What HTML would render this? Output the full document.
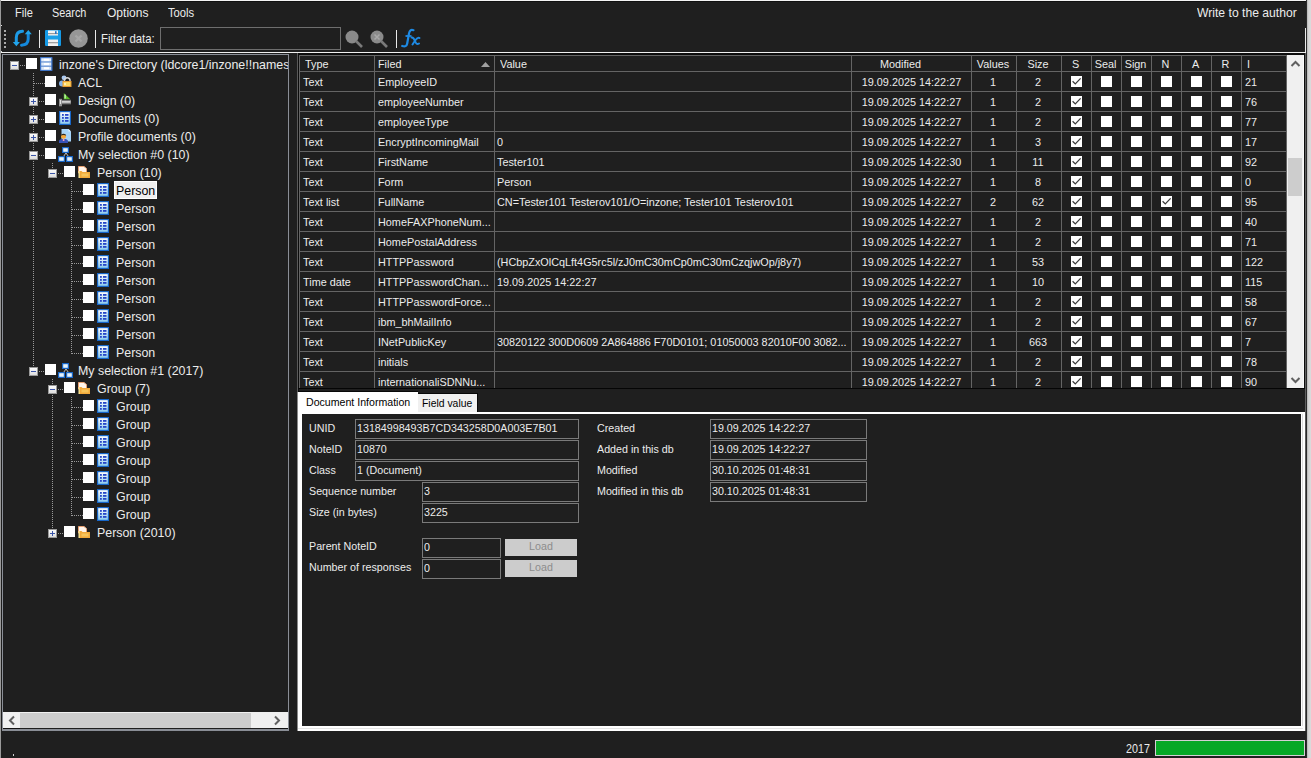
<!DOCTYPE html><html><head><meta charset="utf-8"><style>
html,body{margin:0;padding:0;}
body{width:1311px;height:758px;overflow:hidden;position:relative;background:#1f1f1f;font-family:"Liberation Sans",sans-serif;}
.t{position:absolute;white-space:nowrap;line-height:1;}
.a{position:absolute;}
svg{position:absolute;overflow:visible}
</style></head><body>
<div style="position:absolute;left:0px;top:0px;width:1311px;height:1px;background:#f4f4f4"></div>
<div style="position:absolute;left:0px;top:1px;width:1307px;height:1px;background:#111"></div>
<div style="position:absolute;left:0px;top:0px;width:1px;height:758px;background:#9a9a9a"></div>
<div style="position:absolute;left:1307px;top:0px;width:4px;height:758px;background:linear-gradient(to right,#b4b4b4,#d4d4d4 40%,#dcdcdc)"></div>
<div style="position:absolute;left:1306px;top:0px;width:1px;height:758px;background:#2a2a2a"></div>
<div class="t" style="left:15.30px;top:6.50px;font-size:12.4px;color:#ececec;transform:scaleX(0.8911);transform-origin:0 0;">File</div>
<div class="t" style="left:52.30px;top:6.50px;font-size:12.4px;color:#ececec;transform:scaleX(0.8757);transform-origin:0 0;">Search</div>
<div class="t" style="left:106.50px;top:6.50px;font-size:12.4px;color:#ececec;transform:scaleX(0.9712);transform-origin:0 0;">Options</div>
<div class="t" style="left:167.50px;top:6.50px;font-size:12.4px;color:#ececec;transform:scaleX(0.9053);transform-origin:0 0;">Tools</div>
<div class="t" style="left:1197.40px;top:6.50px;font-size:12.4px;color:#ececec;transform:scaleX(0.9806);transform-origin:0 0;">Write to the author</div>
<div style="position:absolute;left:4px;top:30px;width:2px;height:2px;background:#d8d8d8;border-radius:1px"></div>
<div style="position:absolute;left:4px;top:34px;width:2px;height:2px;background:#d8d8d8;border-radius:1px"></div>
<div style="position:absolute;left:4px;top:38px;width:2px;height:2px;background:#d8d8d8;border-radius:1px"></div>
<div style="position:absolute;left:4px;top:42px;width:2px;height:2px;background:#d8d8d8;border-radius:1px"></div>
<div style="position:absolute;left:4px;top:46px;width:2px;height:2px;background:#d8d8d8;border-radius:1px"></div>
<div style="position:absolute;left:1px;top:25px;width:1px;height:1px;background:#ddd"></div>
<div style="position:absolute;left:1px;top:51px;width:1px;height:1px;background:#ddd"></div>
<svg style="left:10px;top:27px" width="24" height="23" viewBox="0 0 24 23">
<path d="M12.5 4.3 C8.5 4.5 6.3 6.5 6.3 10.5 V15.5" stroke="#1d9be6" stroke-width="3" fill="none" stroke-linecap="round"/>
<path d="M2.8 15 L9.9 15 L6.35 19.3 Z" fill="#22a6ec"/>
<path d="M11.5 18.2 C16 18 18.2 16 18.2 12 V7" stroke="#158ade" stroke-width="3" fill="none" stroke-linecap="round"/>
<path d="M14.8 7.2 L21.8 7.2 L18.3 3 Z" fill="#22a6ec"/>
</svg>
<div style="position:absolute;left:39px;top:30px;width:1px;height:18px;background:#e8e8e8"></div>
<div style="position:absolute;left:95px;top:30px;width:1px;height:18px;background:#e8e8e8"></div>
<div style="position:absolute;left:396px;top:30px;width:1px;height:18px;background:#e8e8e8"></div>
<svg style="left:45px;top:30px" width="16" height="16" viewBox="0 0 16 16">
<rect x="0" y="0" width="16" height="16" rx="1" fill="#159ae6"/>
<rect x="3" y="0.5" width="10" height="5" fill="#f4f4f4"/>
<rect x="3" y="3" width="10" height="1.2" fill="#9a9a9a"/>
<rect x="10" y="1.2" width="1.6" height="2.6" fill="#1f70c8"/>
<rect x="3" y="6" width="10" height="3" fill="#1aa0e8"/>
<rect x="3" y="9.5" width="10" height="6.5" fill="#f0f0f0"/>
<rect x="3" y="12" width="10" height="1.3" fill="#a0a0a0"/>
</svg>
<svg style="left:69px;top:29px" width="19" height="19" viewBox="0 0 19 19">
<circle cx="9.5" cy="9.5" r="9.3" fill="#969696"/>
<path d="M6.5 6.5 L12.5 12.5 M12.5 6.5 L6.5 12.5" stroke="#a6a6a6" stroke-width="2.4"/>
</svg>
<div class="t" style="left:100.70px;top:32.50px;font-size:12.4px;color:#ececec;transform:scaleX(0.9184);transform-origin:0 0;">Filter data:</div>
<div style="position:absolute;left:160px;top:27px;width:179px;height:21px;border:1px solid #6e6e6e"></div>
<svg style="left:345px;top:30px" width="18" height="18" viewBox="0 0 18 18">
<circle cx="7" cy="7" r="6.5" fill="#8a8a8a"/>
<path d="M11 11 L17 17" stroke="#7a7a7a" stroke-width="2.6"/>
</svg>
<svg style="left:370px;top:30px" width="18" height="18" viewBox="0 0 18 18">
<circle cx="7" cy="7" r="6.5" fill="#8a8a8a"/>
<path d="M4.5 4.5 L9.5 9.5 M9.5 4.5 L4.5 9.5" stroke="#a8a8a8" stroke-width="1.5"/>
<path d="M11 11 L17 17" stroke="#7a7a7a" stroke-width="2.6"/>
</svg>
<svg style="left:400px;top:28px" width="21" height="20" viewBox="0 0 21 20">
<path d="M13.5 2.2 C11 1.2 9.6 2.5 9 5.5 L7.2 15.5 C6.7 18.2 5 19 2.2 18" stroke="#1e8ae4" stroke-width="2.2" fill="none" stroke-linecap="round"/>
<path d="M5.5 8 H11.5" stroke="#1e8ae4" stroke-width="1.8"/>
<path d="M11.5 9.5 C13.5 9 14 10.5 15 13 C16 15.8 17 16.8 19 15.5" stroke="#1e8ae4" stroke-width="2" fill="none" stroke-linecap="round"/>
<path d="M19.5 10 C18 9 17 10 15.5 12 L12.5 16.5" stroke="#1e8ae4" stroke-width="2" fill="none" stroke-linecap="round"/>
</svg>
<div style="position:absolute;left:1305px;top:28px;width:1px;height:25px;background:#e8e8e8"></div>
<div style="position:absolute;left:1px;top:52px;width:1305px;height:1px;background:#f0f0f0"></div>
<div style="position:absolute;left:2px;top:54px;width:287px;height:677px;background:#8a8e96"></div>
<div style="position:absolute;left:3px;top:55px;width:285px;height:674px;background:#1f1f1f"></div>
<div style="position:absolute;left:3px;top:55px;width:285px;height:657px;overflow:hidden"><div style="position:absolute;left:-3px;top:-55px;width:1311px;height:758px">
<div style="position:absolute;left:33px;top:73px;width:1px;height:299px;background:repeating-linear-gradient(to bottom,#9a9a9a 0 1px,transparent 1px 2px)"></div>
<div style="position:absolute;left:52px;top:163px;width:1px;height:11px;background:repeating-linear-gradient(to bottom,#9a9a9a 0 1px,transparent 1px 2px)"></div>
<div style="position:absolute;left:52px;top:379px;width:1px;height:155px;background:repeating-linear-gradient(to bottom,#9a9a9a 0 1px,transparent 1px 2px)"></div>
<div style="position:absolute;left:71px;top:181px;width:1px;height:173px;background:repeating-linear-gradient(to bottom,#9a9a9a 0 1px,transparent 1px 2px)"></div>
<div style="position:absolute;left:71px;top:397px;width:1px;height:119px;background:repeating-linear-gradient(to bottom,#9a9a9a 0 1px,transparent 1px 2px)"></div>
<div style="position:absolute;left:20px;top:65px;width:6px;height:1px;background:repeating-linear-gradient(to right,#9a9a9a 0 1px,transparent 1px 2px)"></div>
<div style="position:absolute;left:10px;top:61px;width:7px;height:7px;border:1px solid #9a9a9a;background:linear-gradient(#fbfbfb,#dedede)"></div>
<div style="position:absolute;left:12px;top:65px;width:5px;height:1px;background:#3a55a8"></div>
<div style="position:absolute;left:26px;top:58px;width:11px;height:11px;background:#fff"></div>
<svg style="left:40px;top:57px" width="13" height="14" viewBox="0 0 13 14">
<rect x="0" y="0" width="12.5" height="14" rx="0.8" fill="#3f74c6"/>
<rect x="1.2" y="1.2" width="10" height="3.3" fill="#e4eefb"/>
<rect x="1.2" y="5.4" width="10" height="3.3" fill="#dde9f9"/>
<rect x="1.2" y="9.6" width="10" height="3.3" fill="#d6e4f7"/>
<rect x="4" y="1.8" width="5" height="2" fill="#ffffff"/>
<rect x="4" y="6" width="5" height="2" fill="#ffffff"/>
<rect x="4" y="10.2" width="5" height="2" fill="#ffffff"/>
</svg>
<div class="t" style="left:59.00px;top:58.50px;font-size:12.4px;color:#ececec;">inzone's Directory (ldcore1/inzone!!names.nsf)</div>
<div style="position:absolute;left:34px;top:83px;width:11px;height:1px;background:repeating-linear-gradient(to right,#9a9a9a 0 1px,transparent 1px 2px)"></div>
<div style="position:absolute;left:45px;top:76px;width:11px;height:11px;background:#fff"></div>
<svg style="left:59px;top:75px" width="14" height="13" viewBox="0 0 14 13">
<circle cx="5" cy="2.8" r="2.4" fill="#a9c8f0"/><circle cx="3" cy="8.5" r="3" fill="#86b4ea"/>
<path d="M5.5 6 V4.8 A2.8 2.6 0 0 1 11 4.8 V6" stroke="#d8d8d8" stroke-width="1.5" fill="none"/>
<rect x="3.5" y="6" width="9" height="6" fill="#e89a30"/><rect x="4.5" y="7" width="7" height="4" fill="#fcd864"/><rect x="5.5" y="8" width="1" height="2" fill="#fff"/>
</svg>
<div class="t" style="left:78.00px;top:76.50px;font-size:12.4px;color:#ececec;">ACL</div>
<div style="position:absolute;left:39px;top:101px;width:6px;height:1px;background:repeating-linear-gradient(to right,#9a9a9a 0 1px,transparent 1px 2px)"></div>
<div style="position:absolute;left:29px;top:97px;width:7px;height:7px;border:1px solid #9a9a9a;background:linear-gradient(#fbfbfb,#dedede)"></div>
<div style="position:absolute;left:31px;top:101px;width:5px;height:1px;background:#3a55a8"></div>
<div style="position:absolute;left:33px;top:99px;width:1px;height:5px;background:#3a55a8"></div>
<div style="position:absolute;left:45px;top:94px;width:11px;height:11px;background:#fff"></div>
<svg style="left:59px;top:93px" width="13" height="14" viewBox="0 0 13 14">
<path d="M4.8 0 L11.3 6.3 L4.8 6.3 Z" fill="#5cc22a"/>
<rect x="5.6" y="1.5" width="1" height="4" fill="#eaffea"/>
<rect x="0.5" y="6.8" width="11.5" height="4.5" fill="#7a7a7a"/>
<rect x="2.5" y="8.2" width="9" height="1.4" fill="#e8e8e8"/>
<rect x="0" y="5.8" width="3" height="7.5" fill="#909090"/>
<rect x="1" y="7" width="1" height="4" fill="#e0e0e0"/>
</svg>
<div class="t" style="left:78.00px;top:94.50px;font-size:12.4px;color:#ececec;">Design (0)</div>
<div style="position:absolute;left:39px;top:119px;width:6px;height:1px;background:repeating-linear-gradient(to right,#9a9a9a 0 1px,transparent 1px 2px)"></div>
<div style="position:absolute;left:29px;top:115px;width:7px;height:7px;border:1px solid #9a9a9a;background:linear-gradient(#fbfbfb,#dedede)"></div>
<div style="position:absolute;left:31px;top:119px;width:5px;height:1px;background:#3a55a8"></div>
<div style="position:absolute;left:33px;top:117px;width:1px;height:5px;background:#3a55a8"></div>
<div style="position:absolute;left:45px;top:112px;width:11px;height:11px;background:#fff"></div>
<svg style="left:59px;top:111px" width="12" height="14" viewBox="0 0 12 14">
<defs><linearGradient id="gdoc" x1="0" x2="0" y1="0" y2="1"><stop offset="0" stop-color="#ffffff"/><stop offset="1" stop-color="#8ccbee"/></linearGradient></defs>
<rect x="0" y="0" width="12" height="14" fill="#1766c8"/>
<rect x="1.2" y="1.2" width="9.6" height="11.6" fill="url(#gdoc)"/>
<rect x="3" y="3" width="1.8" height="1.8" fill="#2546c8"/><rect x="6" y="3" width="3.5" height="1.8" fill="#2546c8"/>
<rect x="3" y="6" width="1.8" height="1.8" fill="#2546c8"/><rect x="6" y="6" width="3.5" height="1.8" fill="#2546c8"/>
<rect x="3" y="9" width="1.8" height="1.8" fill="#2546c8"/><rect x="6" y="9" width="3.5" height="1.8" fill="#2546c8"/>
</svg>
<div class="t" style="left:78.00px;top:112.50px;font-size:12.4px;color:#ececec;">Documents (0)</div>
<div style="position:absolute;left:39px;top:137px;width:6px;height:1px;background:repeating-linear-gradient(to right,#9a9a9a 0 1px,transparent 1px 2px)"></div>
<div style="position:absolute;left:29px;top:133px;width:7px;height:7px;border:1px solid #9a9a9a;background:linear-gradient(#fbfbfb,#dedede)"></div>
<div style="position:absolute;left:31px;top:137px;width:5px;height:1px;background:#3a55a8"></div>
<div style="position:absolute;left:33px;top:135px;width:1px;height:5px;background:#3a55a8"></div>
<div style="position:absolute;left:45px;top:130px;width:11px;height:11px;background:#fff"></div>
<svg style="left:59px;top:129px" width="13" height="14" viewBox="0 0 13 14">
<path d="M2.5 0 H9.5 L12 2.5 V12.5 H2.5 Z" fill="#a6d4fa"/>
<path d="M9.5 0 V2.5 H12 Z" fill="#e8f4ff"/>
<circle cx="4.5" cy="7.2" r="2.5" fill="#f6a73a"/>
<path d="M1.8 6.8 C1.8 4 7.2 4 7.2 6.8 C6 5.8 3 5.8 1.8 6.8 Z" fill="#2a2a2a"/>
<path d="M0 14 V12.2 C0 10.6 1.5 10 4.5 10 C7.5 10 9 10.6 9 12.2 V14 Z" fill="#3652b8"/>
<rect x="3.8" y="10" width="1.6" height="2" fill="#f0a0b8"/>
</svg>
<div class="t" style="left:78.00px;top:130.50px;font-size:12.4px;color:#ececec;">Profile documents (0)</div>
<div style="position:absolute;left:39px;top:155px;width:6px;height:1px;background:repeating-linear-gradient(to right,#9a9a9a 0 1px,transparent 1px 2px)"></div>
<div style="position:absolute;left:29px;top:151px;width:7px;height:7px;border:1px solid #9a9a9a;background:linear-gradient(#fbfbfb,#dedede)"></div>
<div style="position:absolute;left:31px;top:155px;width:5px;height:1px;background:#3a55a8"></div>
<div style="position:absolute;left:45px;top:148px;width:11px;height:11px;background:#fff"></div>
<svg style="left:59px;top:147px;margin-left:-1px" width="16" height="16" viewBox="-1 0 16 16">
<path d="M4.5 9.5 L7 6 L9.5 9.5" stroke="#c0c0c0" stroke-width="1" fill="none"/>
<rect x="3" y="0" width="7" height="6" fill="#1766c8"/><rect x="4.2" y="1.2" width="4.6" height="3.6" fill="#e4f2fc"/>
<rect x="-1" y="9" width="7" height="6" fill="#1766c8"/><rect x="0.2" y="10.2" width="4.6" height="3.6" fill="#e4f2fc"/>
<rect x="7" y="9" width="7" height="6" fill="#1766c8"/><rect x="8.2" y="10.2" width="4.6" height="3.6" fill="#e4f2fc"/>
</svg>
<div class="t" style="left:78.00px;top:148.50px;font-size:12.4px;color:#ececec;">My selection #0 (10)</div>
<div style="position:absolute;left:58px;top:173px;width:6px;height:1px;background:repeating-linear-gradient(to right,#9a9a9a 0 1px,transparent 1px 2px)"></div>
<div style="position:absolute;left:48px;top:169px;width:7px;height:7px;border:1px solid #9a9a9a;background:linear-gradient(#fbfbfb,#dedede)"></div>
<div style="position:absolute;left:50px;top:173px;width:5px;height:1px;background:#3a55a8"></div>
<div style="position:absolute;left:64px;top:166px;width:11px;height:11px;background:#fff"></div>
<svg style="left:78px;top:165px" width="14" height="14" viewBox="0 0 14 14">
<path d="M0.5 1.5 H6 L8.5 3.5 V8 H0.5 Z" fill="#fff4ea" stroke="#e8a070" stroke-width="1"/>
<path d="M1 13 V6 H3.5 L4.5 7 H12 V13 Z" fill="#f2a93a"/>
<rect x="0.5" y="6" width="1.2" height="7" fill="#fff1a0"/>
<rect x="3.5" y="8.5" width="7" height="3" fill="#f7c45a"/>
</svg>
<div class="t" style="left:97.00px;top:166.50px;font-size:12.4px;color:#ececec;">Person (10)</div>
<div style="position:absolute;left:72px;top:191px;width:11px;height:1px;background:repeating-linear-gradient(to right,#9a9a9a 0 1px,transparent 1px 2px)"></div>
<div style="position:absolute;left:83px;top:184px;width:11px;height:11px;background:#fff"></div>
<svg style="left:97px;top:183px" width="12" height="14" viewBox="0 0 12 14">
<defs><linearGradient id="gdoc" x1="0" x2="0" y1="0" y2="1"><stop offset="0" stop-color="#ffffff"/><stop offset="1" stop-color="#8ccbee"/></linearGradient></defs>
<rect x="0" y="0" width="12" height="14" fill="#1766c8"/>
<rect x="1.2" y="1.2" width="9.6" height="11.6" fill="url(#gdoc)"/>
<rect x="3" y="3" width="1.8" height="1.8" fill="#2546c8"/><rect x="6" y="3" width="3.5" height="1.8" fill="#2546c8"/>
<rect x="3" y="6" width="1.8" height="1.8" fill="#2546c8"/><rect x="6" y="6" width="3.5" height="1.8" fill="#2546c8"/>
<rect x="3" y="9" width="1.8" height="1.8" fill="#2546c8"/><rect x="6" y="9" width="3.5" height="1.8" fill="#2546c8"/>
</svg>
<div style="position:absolute;left:114px;top:181px;width:41px;height:16px;background:#efefef;border:1px solid #fff"></div>
<div class="t" style="left:116.00px;top:184.50px;font-size:12.4px;color:#000;">Person</div>
<div style="position:absolute;left:72px;top:209px;width:11px;height:1px;background:repeating-linear-gradient(to right,#9a9a9a 0 1px,transparent 1px 2px)"></div>
<div style="position:absolute;left:83px;top:202px;width:11px;height:11px;background:#fff"></div>
<svg style="left:97px;top:201px" width="12" height="14" viewBox="0 0 12 14">
<defs><linearGradient id="gdoc" x1="0" x2="0" y1="0" y2="1"><stop offset="0" stop-color="#ffffff"/><stop offset="1" stop-color="#8ccbee"/></linearGradient></defs>
<rect x="0" y="0" width="12" height="14" fill="#1766c8"/>
<rect x="1.2" y="1.2" width="9.6" height="11.6" fill="url(#gdoc)"/>
<rect x="3" y="3" width="1.8" height="1.8" fill="#2546c8"/><rect x="6" y="3" width="3.5" height="1.8" fill="#2546c8"/>
<rect x="3" y="6" width="1.8" height="1.8" fill="#2546c8"/><rect x="6" y="6" width="3.5" height="1.8" fill="#2546c8"/>
<rect x="3" y="9" width="1.8" height="1.8" fill="#2546c8"/><rect x="6" y="9" width="3.5" height="1.8" fill="#2546c8"/>
</svg>
<div class="t" style="left:116.00px;top:202.50px;font-size:12.4px;color:#ececec;">Person</div>
<div style="position:absolute;left:72px;top:227px;width:11px;height:1px;background:repeating-linear-gradient(to right,#9a9a9a 0 1px,transparent 1px 2px)"></div>
<div style="position:absolute;left:83px;top:220px;width:11px;height:11px;background:#fff"></div>
<svg style="left:97px;top:219px" width="12" height="14" viewBox="0 0 12 14">
<defs><linearGradient id="gdoc" x1="0" x2="0" y1="0" y2="1"><stop offset="0" stop-color="#ffffff"/><stop offset="1" stop-color="#8ccbee"/></linearGradient></defs>
<rect x="0" y="0" width="12" height="14" fill="#1766c8"/>
<rect x="1.2" y="1.2" width="9.6" height="11.6" fill="url(#gdoc)"/>
<rect x="3" y="3" width="1.8" height="1.8" fill="#2546c8"/><rect x="6" y="3" width="3.5" height="1.8" fill="#2546c8"/>
<rect x="3" y="6" width="1.8" height="1.8" fill="#2546c8"/><rect x="6" y="6" width="3.5" height="1.8" fill="#2546c8"/>
<rect x="3" y="9" width="1.8" height="1.8" fill="#2546c8"/><rect x="6" y="9" width="3.5" height="1.8" fill="#2546c8"/>
</svg>
<div class="t" style="left:116.00px;top:220.50px;font-size:12.4px;color:#ececec;">Person</div>
<div style="position:absolute;left:72px;top:245px;width:11px;height:1px;background:repeating-linear-gradient(to right,#9a9a9a 0 1px,transparent 1px 2px)"></div>
<div style="position:absolute;left:83px;top:238px;width:11px;height:11px;background:#fff"></div>
<svg style="left:97px;top:237px" width="12" height="14" viewBox="0 0 12 14">
<defs><linearGradient id="gdoc" x1="0" x2="0" y1="0" y2="1"><stop offset="0" stop-color="#ffffff"/><stop offset="1" stop-color="#8ccbee"/></linearGradient></defs>
<rect x="0" y="0" width="12" height="14" fill="#1766c8"/>
<rect x="1.2" y="1.2" width="9.6" height="11.6" fill="url(#gdoc)"/>
<rect x="3" y="3" width="1.8" height="1.8" fill="#2546c8"/><rect x="6" y="3" width="3.5" height="1.8" fill="#2546c8"/>
<rect x="3" y="6" width="1.8" height="1.8" fill="#2546c8"/><rect x="6" y="6" width="3.5" height="1.8" fill="#2546c8"/>
<rect x="3" y="9" width="1.8" height="1.8" fill="#2546c8"/><rect x="6" y="9" width="3.5" height="1.8" fill="#2546c8"/>
</svg>
<div class="t" style="left:116.00px;top:238.50px;font-size:12.4px;color:#ececec;">Person</div>
<div style="position:absolute;left:72px;top:263px;width:11px;height:1px;background:repeating-linear-gradient(to right,#9a9a9a 0 1px,transparent 1px 2px)"></div>
<div style="position:absolute;left:83px;top:256px;width:11px;height:11px;background:#fff"></div>
<svg style="left:97px;top:255px" width="12" height="14" viewBox="0 0 12 14">
<defs><linearGradient id="gdoc" x1="0" x2="0" y1="0" y2="1"><stop offset="0" stop-color="#ffffff"/><stop offset="1" stop-color="#8ccbee"/></linearGradient></defs>
<rect x="0" y="0" width="12" height="14" fill="#1766c8"/>
<rect x="1.2" y="1.2" width="9.6" height="11.6" fill="url(#gdoc)"/>
<rect x="3" y="3" width="1.8" height="1.8" fill="#2546c8"/><rect x="6" y="3" width="3.5" height="1.8" fill="#2546c8"/>
<rect x="3" y="6" width="1.8" height="1.8" fill="#2546c8"/><rect x="6" y="6" width="3.5" height="1.8" fill="#2546c8"/>
<rect x="3" y="9" width="1.8" height="1.8" fill="#2546c8"/><rect x="6" y="9" width="3.5" height="1.8" fill="#2546c8"/>
</svg>
<div class="t" style="left:116.00px;top:256.50px;font-size:12.4px;color:#ececec;">Person</div>
<div style="position:absolute;left:72px;top:281px;width:11px;height:1px;background:repeating-linear-gradient(to right,#9a9a9a 0 1px,transparent 1px 2px)"></div>
<div style="position:absolute;left:83px;top:274px;width:11px;height:11px;background:#fff"></div>
<svg style="left:97px;top:273px" width="12" height="14" viewBox="0 0 12 14">
<defs><linearGradient id="gdoc" x1="0" x2="0" y1="0" y2="1"><stop offset="0" stop-color="#ffffff"/><stop offset="1" stop-color="#8ccbee"/></linearGradient></defs>
<rect x="0" y="0" width="12" height="14" fill="#1766c8"/>
<rect x="1.2" y="1.2" width="9.6" height="11.6" fill="url(#gdoc)"/>
<rect x="3" y="3" width="1.8" height="1.8" fill="#2546c8"/><rect x="6" y="3" width="3.5" height="1.8" fill="#2546c8"/>
<rect x="3" y="6" width="1.8" height="1.8" fill="#2546c8"/><rect x="6" y="6" width="3.5" height="1.8" fill="#2546c8"/>
<rect x="3" y="9" width="1.8" height="1.8" fill="#2546c8"/><rect x="6" y="9" width="3.5" height="1.8" fill="#2546c8"/>
</svg>
<div class="t" style="left:116.00px;top:274.50px;font-size:12.4px;color:#ececec;">Person</div>
<div style="position:absolute;left:72px;top:299px;width:11px;height:1px;background:repeating-linear-gradient(to right,#9a9a9a 0 1px,transparent 1px 2px)"></div>
<div style="position:absolute;left:83px;top:292px;width:11px;height:11px;background:#fff"></div>
<svg style="left:97px;top:291px" width="12" height="14" viewBox="0 0 12 14">
<defs><linearGradient id="gdoc" x1="0" x2="0" y1="0" y2="1"><stop offset="0" stop-color="#ffffff"/><stop offset="1" stop-color="#8ccbee"/></linearGradient></defs>
<rect x="0" y="0" width="12" height="14" fill="#1766c8"/>
<rect x="1.2" y="1.2" width="9.6" height="11.6" fill="url(#gdoc)"/>
<rect x="3" y="3" width="1.8" height="1.8" fill="#2546c8"/><rect x="6" y="3" width="3.5" height="1.8" fill="#2546c8"/>
<rect x="3" y="6" width="1.8" height="1.8" fill="#2546c8"/><rect x="6" y="6" width="3.5" height="1.8" fill="#2546c8"/>
<rect x="3" y="9" width="1.8" height="1.8" fill="#2546c8"/><rect x="6" y="9" width="3.5" height="1.8" fill="#2546c8"/>
</svg>
<div class="t" style="left:116.00px;top:292.50px;font-size:12.4px;color:#ececec;">Person</div>
<div style="position:absolute;left:72px;top:317px;width:11px;height:1px;background:repeating-linear-gradient(to right,#9a9a9a 0 1px,transparent 1px 2px)"></div>
<div style="position:absolute;left:83px;top:310px;width:11px;height:11px;background:#fff"></div>
<svg style="left:97px;top:309px" width="12" height="14" viewBox="0 0 12 14">
<defs><linearGradient id="gdoc" x1="0" x2="0" y1="0" y2="1"><stop offset="0" stop-color="#ffffff"/><stop offset="1" stop-color="#8ccbee"/></linearGradient></defs>
<rect x="0" y="0" width="12" height="14" fill="#1766c8"/>
<rect x="1.2" y="1.2" width="9.6" height="11.6" fill="url(#gdoc)"/>
<rect x="3" y="3" width="1.8" height="1.8" fill="#2546c8"/><rect x="6" y="3" width="3.5" height="1.8" fill="#2546c8"/>
<rect x="3" y="6" width="1.8" height="1.8" fill="#2546c8"/><rect x="6" y="6" width="3.5" height="1.8" fill="#2546c8"/>
<rect x="3" y="9" width="1.8" height="1.8" fill="#2546c8"/><rect x="6" y="9" width="3.5" height="1.8" fill="#2546c8"/>
</svg>
<div class="t" style="left:116.00px;top:310.50px;font-size:12.4px;color:#ececec;">Person</div>
<div style="position:absolute;left:72px;top:335px;width:11px;height:1px;background:repeating-linear-gradient(to right,#9a9a9a 0 1px,transparent 1px 2px)"></div>
<div style="position:absolute;left:83px;top:328px;width:11px;height:11px;background:#fff"></div>
<svg style="left:97px;top:327px" width="12" height="14" viewBox="0 0 12 14">
<defs><linearGradient id="gdoc" x1="0" x2="0" y1="0" y2="1"><stop offset="0" stop-color="#ffffff"/><stop offset="1" stop-color="#8ccbee"/></linearGradient></defs>
<rect x="0" y="0" width="12" height="14" fill="#1766c8"/>
<rect x="1.2" y="1.2" width="9.6" height="11.6" fill="url(#gdoc)"/>
<rect x="3" y="3" width="1.8" height="1.8" fill="#2546c8"/><rect x="6" y="3" width="3.5" height="1.8" fill="#2546c8"/>
<rect x="3" y="6" width="1.8" height="1.8" fill="#2546c8"/><rect x="6" y="6" width="3.5" height="1.8" fill="#2546c8"/>
<rect x="3" y="9" width="1.8" height="1.8" fill="#2546c8"/><rect x="6" y="9" width="3.5" height="1.8" fill="#2546c8"/>
</svg>
<div class="t" style="left:116.00px;top:328.50px;font-size:12.4px;color:#ececec;">Person</div>
<div style="position:absolute;left:72px;top:353px;width:11px;height:1px;background:repeating-linear-gradient(to right,#9a9a9a 0 1px,transparent 1px 2px)"></div>
<div style="position:absolute;left:83px;top:346px;width:11px;height:11px;background:#fff"></div>
<svg style="left:97px;top:345px" width="12" height="14" viewBox="0 0 12 14">
<defs><linearGradient id="gdoc" x1="0" x2="0" y1="0" y2="1"><stop offset="0" stop-color="#ffffff"/><stop offset="1" stop-color="#8ccbee"/></linearGradient></defs>
<rect x="0" y="0" width="12" height="14" fill="#1766c8"/>
<rect x="1.2" y="1.2" width="9.6" height="11.6" fill="url(#gdoc)"/>
<rect x="3" y="3" width="1.8" height="1.8" fill="#2546c8"/><rect x="6" y="3" width="3.5" height="1.8" fill="#2546c8"/>
<rect x="3" y="6" width="1.8" height="1.8" fill="#2546c8"/><rect x="6" y="6" width="3.5" height="1.8" fill="#2546c8"/>
<rect x="3" y="9" width="1.8" height="1.8" fill="#2546c8"/><rect x="6" y="9" width="3.5" height="1.8" fill="#2546c8"/>
</svg>
<div class="t" style="left:116.00px;top:346.50px;font-size:12.4px;color:#ececec;">Person</div>
<div style="position:absolute;left:39px;top:371px;width:6px;height:1px;background:repeating-linear-gradient(to right,#9a9a9a 0 1px,transparent 1px 2px)"></div>
<div style="position:absolute;left:29px;top:367px;width:7px;height:7px;border:1px solid #9a9a9a;background:linear-gradient(#fbfbfb,#dedede)"></div>
<div style="position:absolute;left:31px;top:371px;width:5px;height:1px;background:#3a55a8"></div>
<div style="position:absolute;left:45px;top:364px;width:11px;height:11px;background:#fff"></div>
<svg style="left:59px;top:363px;margin-left:-1px" width="16" height="16" viewBox="-1 0 16 16">
<path d="M4.5 9.5 L7 6 L9.5 9.5" stroke="#c0c0c0" stroke-width="1" fill="none"/>
<rect x="3" y="0" width="7" height="6" fill="#1766c8"/><rect x="4.2" y="1.2" width="4.6" height="3.6" fill="#e4f2fc"/>
<rect x="-1" y="9" width="7" height="6" fill="#1766c8"/><rect x="0.2" y="10.2" width="4.6" height="3.6" fill="#e4f2fc"/>
<rect x="7" y="9" width="7" height="6" fill="#1766c8"/><rect x="8.2" y="10.2" width="4.6" height="3.6" fill="#e4f2fc"/>
</svg>
<div class="t" style="left:78.00px;top:364.50px;font-size:12.4px;color:#ececec;">My selection #1 (2017)</div>
<div style="position:absolute;left:58px;top:389px;width:6px;height:1px;background:repeating-linear-gradient(to right,#9a9a9a 0 1px,transparent 1px 2px)"></div>
<div style="position:absolute;left:48px;top:385px;width:7px;height:7px;border:1px solid #9a9a9a;background:linear-gradient(#fbfbfb,#dedede)"></div>
<div style="position:absolute;left:50px;top:389px;width:5px;height:1px;background:#3a55a8"></div>
<div style="position:absolute;left:64px;top:382px;width:11px;height:11px;background:#fff"></div>
<svg style="left:78px;top:381px" width="14" height="14" viewBox="0 0 14 14">
<path d="M0.5 1.5 H6 L8.5 3.5 V8 H0.5 Z" fill="#fff4ea" stroke="#e8a070" stroke-width="1"/>
<path d="M1 13 V6 H3.5 L4.5 7 H12 V13 Z" fill="#f2a93a"/>
<rect x="0.5" y="6" width="1.2" height="7" fill="#fff1a0"/>
<rect x="3.5" y="8.5" width="7" height="3" fill="#f7c45a"/>
</svg>
<div class="t" style="left:97.00px;top:382.50px;font-size:12.4px;color:#ececec;">Group (7)</div>
<div style="position:absolute;left:72px;top:407px;width:11px;height:1px;background:repeating-linear-gradient(to right,#9a9a9a 0 1px,transparent 1px 2px)"></div>
<div style="position:absolute;left:83px;top:400px;width:11px;height:11px;background:#fff"></div>
<svg style="left:97px;top:399px" width="12" height="14" viewBox="0 0 12 14">
<defs><linearGradient id="gdoc" x1="0" x2="0" y1="0" y2="1"><stop offset="0" stop-color="#ffffff"/><stop offset="1" stop-color="#8ccbee"/></linearGradient></defs>
<rect x="0" y="0" width="12" height="14" fill="#1766c8"/>
<rect x="1.2" y="1.2" width="9.6" height="11.6" fill="url(#gdoc)"/>
<rect x="3" y="3" width="1.8" height="1.8" fill="#2546c8"/><rect x="6" y="3" width="3.5" height="1.8" fill="#2546c8"/>
<rect x="3" y="6" width="1.8" height="1.8" fill="#2546c8"/><rect x="6" y="6" width="3.5" height="1.8" fill="#2546c8"/>
<rect x="3" y="9" width="1.8" height="1.8" fill="#2546c8"/><rect x="6" y="9" width="3.5" height="1.8" fill="#2546c8"/>
</svg>
<div class="t" style="left:116.00px;top:400.50px;font-size:12.4px;color:#ececec;">Group</div>
<div style="position:absolute;left:72px;top:425px;width:11px;height:1px;background:repeating-linear-gradient(to right,#9a9a9a 0 1px,transparent 1px 2px)"></div>
<div style="position:absolute;left:83px;top:418px;width:11px;height:11px;background:#fff"></div>
<svg style="left:97px;top:417px" width="12" height="14" viewBox="0 0 12 14">
<defs><linearGradient id="gdoc" x1="0" x2="0" y1="0" y2="1"><stop offset="0" stop-color="#ffffff"/><stop offset="1" stop-color="#8ccbee"/></linearGradient></defs>
<rect x="0" y="0" width="12" height="14" fill="#1766c8"/>
<rect x="1.2" y="1.2" width="9.6" height="11.6" fill="url(#gdoc)"/>
<rect x="3" y="3" width="1.8" height="1.8" fill="#2546c8"/><rect x="6" y="3" width="3.5" height="1.8" fill="#2546c8"/>
<rect x="3" y="6" width="1.8" height="1.8" fill="#2546c8"/><rect x="6" y="6" width="3.5" height="1.8" fill="#2546c8"/>
<rect x="3" y="9" width="1.8" height="1.8" fill="#2546c8"/><rect x="6" y="9" width="3.5" height="1.8" fill="#2546c8"/>
</svg>
<div class="t" style="left:116.00px;top:418.50px;font-size:12.4px;color:#ececec;">Group</div>
<div style="position:absolute;left:72px;top:443px;width:11px;height:1px;background:repeating-linear-gradient(to right,#9a9a9a 0 1px,transparent 1px 2px)"></div>
<div style="position:absolute;left:83px;top:436px;width:11px;height:11px;background:#fff"></div>
<svg style="left:97px;top:435px" width="12" height="14" viewBox="0 0 12 14">
<defs><linearGradient id="gdoc" x1="0" x2="0" y1="0" y2="1"><stop offset="0" stop-color="#ffffff"/><stop offset="1" stop-color="#8ccbee"/></linearGradient></defs>
<rect x="0" y="0" width="12" height="14" fill="#1766c8"/>
<rect x="1.2" y="1.2" width="9.6" height="11.6" fill="url(#gdoc)"/>
<rect x="3" y="3" width="1.8" height="1.8" fill="#2546c8"/><rect x="6" y="3" width="3.5" height="1.8" fill="#2546c8"/>
<rect x="3" y="6" width="1.8" height="1.8" fill="#2546c8"/><rect x="6" y="6" width="3.5" height="1.8" fill="#2546c8"/>
<rect x="3" y="9" width="1.8" height="1.8" fill="#2546c8"/><rect x="6" y="9" width="3.5" height="1.8" fill="#2546c8"/>
</svg>
<div class="t" style="left:116.00px;top:436.50px;font-size:12.4px;color:#ececec;">Group</div>
<div style="position:absolute;left:72px;top:461px;width:11px;height:1px;background:repeating-linear-gradient(to right,#9a9a9a 0 1px,transparent 1px 2px)"></div>
<div style="position:absolute;left:83px;top:454px;width:11px;height:11px;background:#fff"></div>
<svg style="left:97px;top:453px" width="12" height="14" viewBox="0 0 12 14">
<defs><linearGradient id="gdoc" x1="0" x2="0" y1="0" y2="1"><stop offset="0" stop-color="#ffffff"/><stop offset="1" stop-color="#8ccbee"/></linearGradient></defs>
<rect x="0" y="0" width="12" height="14" fill="#1766c8"/>
<rect x="1.2" y="1.2" width="9.6" height="11.6" fill="url(#gdoc)"/>
<rect x="3" y="3" width="1.8" height="1.8" fill="#2546c8"/><rect x="6" y="3" width="3.5" height="1.8" fill="#2546c8"/>
<rect x="3" y="6" width="1.8" height="1.8" fill="#2546c8"/><rect x="6" y="6" width="3.5" height="1.8" fill="#2546c8"/>
<rect x="3" y="9" width="1.8" height="1.8" fill="#2546c8"/><rect x="6" y="9" width="3.5" height="1.8" fill="#2546c8"/>
</svg>
<div class="t" style="left:116.00px;top:454.50px;font-size:12.4px;color:#ececec;">Group</div>
<div style="position:absolute;left:72px;top:479px;width:11px;height:1px;background:repeating-linear-gradient(to right,#9a9a9a 0 1px,transparent 1px 2px)"></div>
<div style="position:absolute;left:83px;top:472px;width:11px;height:11px;background:#fff"></div>
<svg style="left:97px;top:471px" width="12" height="14" viewBox="0 0 12 14">
<defs><linearGradient id="gdoc" x1="0" x2="0" y1="0" y2="1"><stop offset="0" stop-color="#ffffff"/><stop offset="1" stop-color="#8ccbee"/></linearGradient></defs>
<rect x="0" y="0" width="12" height="14" fill="#1766c8"/>
<rect x="1.2" y="1.2" width="9.6" height="11.6" fill="url(#gdoc)"/>
<rect x="3" y="3" width="1.8" height="1.8" fill="#2546c8"/><rect x="6" y="3" width="3.5" height="1.8" fill="#2546c8"/>
<rect x="3" y="6" width="1.8" height="1.8" fill="#2546c8"/><rect x="6" y="6" width="3.5" height="1.8" fill="#2546c8"/>
<rect x="3" y="9" width="1.8" height="1.8" fill="#2546c8"/><rect x="6" y="9" width="3.5" height="1.8" fill="#2546c8"/>
</svg>
<div class="t" style="left:116.00px;top:472.50px;font-size:12.4px;color:#ececec;">Group</div>
<div style="position:absolute;left:72px;top:497px;width:11px;height:1px;background:repeating-linear-gradient(to right,#9a9a9a 0 1px,transparent 1px 2px)"></div>
<div style="position:absolute;left:83px;top:490px;width:11px;height:11px;background:#fff"></div>
<svg style="left:97px;top:489px" width="12" height="14" viewBox="0 0 12 14">
<defs><linearGradient id="gdoc" x1="0" x2="0" y1="0" y2="1"><stop offset="0" stop-color="#ffffff"/><stop offset="1" stop-color="#8ccbee"/></linearGradient></defs>
<rect x="0" y="0" width="12" height="14" fill="#1766c8"/>
<rect x="1.2" y="1.2" width="9.6" height="11.6" fill="url(#gdoc)"/>
<rect x="3" y="3" width="1.8" height="1.8" fill="#2546c8"/><rect x="6" y="3" width="3.5" height="1.8" fill="#2546c8"/>
<rect x="3" y="6" width="1.8" height="1.8" fill="#2546c8"/><rect x="6" y="6" width="3.5" height="1.8" fill="#2546c8"/>
<rect x="3" y="9" width="1.8" height="1.8" fill="#2546c8"/><rect x="6" y="9" width="3.5" height="1.8" fill="#2546c8"/>
</svg>
<div class="t" style="left:116.00px;top:490.50px;font-size:12.4px;color:#ececec;">Group</div>
<div style="position:absolute;left:72px;top:515px;width:11px;height:1px;background:repeating-linear-gradient(to right,#9a9a9a 0 1px,transparent 1px 2px)"></div>
<div style="position:absolute;left:83px;top:508px;width:11px;height:11px;background:#fff"></div>
<svg style="left:97px;top:507px" width="12" height="14" viewBox="0 0 12 14">
<defs><linearGradient id="gdoc" x1="0" x2="0" y1="0" y2="1"><stop offset="0" stop-color="#ffffff"/><stop offset="1" stop-color="#8ccbee"/></linearGradient></defs>
<rect x="0" y="0" width="12" height="14" fill="#1766c8"/>
<rect x="1.2" y="1.2" width="9.6" height="11.6" fill="url(#gdoc)"/>
<rect x="3" y="3" width="1.8" height="1.8" fill="#2546c8"/><rect x="6" y="3" width="3.5" height="1.8" fill="#2546c8"/>
<rect x="3" y="6" width="1.8" height="1.8" fill="#2546c8"/><rect x="6" y="6" width="3.5" height="1.8" fill="#2546c8"/>
<rect x="3" y="9" width="1.8" height="1.8" fill="#2546c8"/><rect x="6" y="9" width="3.5" height="1.8" fill="#2546c8"/>
</svg>
<div class="t" style="left:116.00px;top:508.50px;font-size:12.4px;color:#ececec;">Group</div>
<div style="position:absolute;left:58px;top:533px;width:6px;height:1px;background:repeating-linear-gradient(to right,#9a9a9a 0 1px,transparent 1px 2px)"></div>
<div style="position:absolute;left:48px;top:529px;width:7px;height:7px;border:1px solid #9a9a9a;background:linear-gradient(#fbfbfb,#dedede)"></div>
<div style="position:absolute;left:50px;top:533px;width:5px;height:1px;background:#3a55a8"></div>
<div style="position:absolute;left:52px;top:531px;width:1px;height:5px;background:#3a55a8"></div>
<div style="position:absolute;left:64px;top:526px;width:11px;height:11px;background:#fff"></div>
<svg style="left:78px;top:525px" width="14" height="14" viewBox="0 0 14 14">
<path d="M0.5 1.5 H6 L8.5 3.5 V8 H0.5 Z" fill="#fff4ea" stroke="#e8a070" stroke-width="1"/>
<path d="M1 13 V6 H3.5 L4.5 7 H12 V13 Z" fill="#f2a93a"/>
<rect x="0.5" y="6" width="1.2" height="7" fill="#fff1a0"/>
<rect x="3.5" y="8.5" width="7" height="3" fill="#f7c45a"/>
</svg>
<div class="t" style="left:97.00px;top:526.50px;font-size:12.4px;color:#ececec;">Person (2010)</div>
</div></div>
<div style="position:absolute;left:288px;top:54px;width:1px;height:677px;background:#8a8e96"></div>
<div style="position:absolute;left:289px;top:53px;width:8px;height:680px;background:#1f1f1f"></div>
<div style="position:absolute;left:3px;top:712px;width:285px;height:16px;background:#f0f0f0"></div>
<div style="position:absolute;left:20px;top:713px;width:231px;height:15px;background:#cdcdcd"></div>
<div style="position:absolute;left:3px;top:728px;width:17px;height:1px;background:#101010"></div>
<div style="position:absolute;left:270px;top:728px;width:18px;height:1px;background:#101010"></div>
<svg style="left:8px;top:716px" width="8" height="9" viewBox="0 0 8 9"><path d="M6 0.5 L2 4.5 L6 8.5" stroke="#606060" stroke-width="2" fill="none"/></svg>
<svg style="left:273px;top:716px" width="8" height="9" viewBox="0 0 8 9"><path d="M2 0.5 L6 4.5 L2 8.5" stroke="#606060" stroke-width="2" fill="none"/></svg>
<div style="position:absolute;left:297px;top:53px;width:1px;height:339px;background:#5a5a5a"></div>
<div style="position:absolute;left:298px;top:53px;width:1007px;height:2px;background:#0c0c0c"></div>
<div style="position:absolute;left:298px;top:53px;width:1px;height:339px;background:#0c0c0c"></div>
<div style="position:absolute;left:1304px;top:53px;width:1px;height:336px;background:#0c0c0c"></div>
<div style="position:absolute;left:1305px;top:53px;width:1px;height:678px;background:#5e5e5e"></div>
<div style="position:absolute;left:299px;top:55px;width:1px;height:333px;background:#646464"></div>
<div style="position:absolute;left:374px;top:55px;width:1px;height:333px;background:#646464"></div>
<div style="position:absolute;left:494px;top:55px;width:1px;height:333px;background:#646464"></div>
<div style="position:absolute;left:851px;top:55px;width:1px;height:333px;background:#646464"></div>
<div style="position:absolute;left:971px;top:55px;width:1px;height:333px;background:#646464"></div>
<div style="position:absolute;left:1016px;top:55px;width:1px;height:333px;background:#646464"></div>
<div style="position:absolute;left:1061px;top:55px;width:1px;height:333px;background:#646464"></div>
<div style="position:absolute;left:1091px;top:55px;width:1px;height:333px;background:#646464"></div>
<div style="position:absolute;left:1121px;top:55px;width:1px;height:333px;background:#646464"></div>
<div style="position:absolute;left:1151px;top:55px;width:1px;height:333px;background:#646464"></div>
<div style="position:absolute;left:1181px;top:55px;width:1px;height:333px;background:#646464"></div>
<div style="position:absolute;left:1211px;top:55px;width:1px;height:333px;background:#646464"></div>
<div style="position:absolute;left:1241px;top:55px;width:1px;height:333px;background:#646464"></div>
<div style="position:absolute;left:1286px;top:55px;width:1px;height:333px;background:#646464"></div>
<div style="position:absolute;left:299px;top:55px;width:988px;height:1px;background:#646464"></div>
<div style="position:absolute;left:299px;top:71px;width:988px;height:1px;background:#646464"></div>
<div style="position:absolute;left:299px;top:91px;width:988px;height:1px;background:#646464"></div>
<div style="position:absolute;left:299px;top:111px;width:988px;height:1px;background:#646464"></div>
<div style="position:absolute;left:299px;top:131px;width:988px;height:1px;background:#646464"></div>
<div style="position:absolute;left:299px;top:151px;width:988px;height:1px;background:#646464"></div>
<div style="position:absolute;left:299px;top:171px;width:988px;height:1px;background:#646464"></div>
<div style="position:absolute;left:299px;top:191px;width:988px;height:1px;background:#646464"></div>
<div style="position:absolute;left:299px;top:211px;width:988px;height:1px;background:#646464"></div>
<div style="position:absolute;left:299px;top:231px;width:988px;height:1px;background:#646464"></div>
<div style="position:absolute;left:299px;top:251px;width:988px;height:1px;background:#646464"></div>
<div style="position:absolute;left:299px;top:271px;width:988px;height:1px;background:#646464"></div>
<div style="position:absolute;left:299px;top:291px;width:988px;height:1px;background:#646464"></div>
<div style="position:absolute;left:299px;top:311px;width:988px;height:1px;background:#646464"></div>
<div style="position:absolute;left:299px;top:331px;width:988px;height:1px;background:#646464"></div>
<div style="position:absolute;left:299px;top:351px;width:988px;height:1px;background:#646464"></div>
<div style="position:absolute;left:299px;top:371px;width:988px;height:1px;background:#646464"></div>
<div class="t" style="left:305.00px;top:58.18px;font-size:11.6px;color:#ececec;transform:scaleX(0.935);transform-origin:0 0;">Type</div>
<div class="t" style="left:378.00px;top:58.18px;font-size:11.6px;color:#ececec;transform:scaleX(0.935);transform-origin:0 0;">Filed</div>
<svg style="left:481px;top:62px" width="9" height="5" viewBox="0 0 9 5"><path d="M0 5 L4.5 0 L9 5 Z" fill="#a0a0a0"/></svg>
<div class="t" style="left:500.00px;top:58.18px;font-size:11.6px;color:#ececec;transform:scaleX(0.935);transform-origin:0 0;">Value</div>
<div class="t" style="left:841px;width:119px;text-align:center;top:58.18px;font-size:11.6px;color:#ececec;transform:scaleX(0.935);transform-origin:50% 0;">Modified</div>
<div class="t" style="left:971px;width:44px;text-align:center;top:58.18px;font-size:11.6px;color:#ececec;transform:scaleX(0.935);transform-origin:50% 0;">Values</div>
<div class="t" style="left:1016px;width:44px;text-align:center;top:58.18px;font-size:11.6px;color:#ececec;transform:scaleX(0.935);transform-origin:50% 0;">Size</div>
<div class="t" style="left:1061px;width:29px;text-align:center;top:58.18px;font-size:11.6px;color:#ececec;transform:scaleX(0.935);transform-origin:50% 0;">S</div>
<div class="t" style="left:1091px;width:29px;text-align:center;top:58.18px;font-size:11.6px;color:#ececec;transform:scaleX(0.935);transform-origin:50% 0;">Seal</div>
<div class="t" style="left:1121px;width:29px;text-align:center;top:58.18px;font-size:11.6px;color:#ececec;transform:scaleX(0.935);transform-origin:50% 0;">Sign</div>
<div class="t" style="left:1151px;width:29px;text-align:center;top:58.18px;font-size:11.6px;color:#ececec;transform:scaleX(0.935);transform-origin:50% 0;">N</div>
<div class="t" style="left:1181px;width:29px;text-align:center;top:58.18px;font-size:11.6px;color:#ececec;transform:scaleX(0.935);transform-origin:50% 0;">A</div>
<div class="t" style="left:1211px;width:29px;text-align:center;top:58.18px;font-size:11.6px;color:#ececec;transform:scaleX(0.935);transform-origin:50% 0;">R</div>
<div class="t" style="left:1247.00px;top:58.18px;font-size:11.6px;color:#ececec;transform:scaleX(0.935);transform-origin:0 0;">I</div>
<div class="t" style="left:302.50px;top:76.18px;font-size:11.6px;color:#ececec;transform:scaleX(0.935);transform-origin:0 0;">Text</div>
<div class="t" style="left:377.50px;top:76.18px;font-size:11.6px;color:#ececec;transform:scaleX(0.935);transform-origin:0 0;">EmployeeID</div>
<div class="t" style="left:852px;width:119px;text-align:center;top:76.18px;font-size:11.6px;color:#ececec;transform:scaleX(0.935);transform-origin:50% 0;">19.09.2025 14:22:27</div>
<div class="t" style="left:971px;width:44px;text-align:center;top:76.18px;font-size:11.6px;color:#ececec;transform:scaleX(0.935);transform-origin:50% 0;">1</div>
<div class="t" style="left:1016px;width:44px;text-align:center;top:76.18px;font-size:11.6px;color:#ececec;transform:scaleX(0.935);transform-origin:50% 0;">2</div>
<svg style="left:1071px;top:76px" width="11" height="11" viewBox="0 0 11 11"><rect width="11" height="11" fill="#fff"/><path d="M1.6 5.2 L4.3 7.9 L9.6 2.4" stroke="#3a3a3a" stroke-width="1.25" fill="none"/></svg>
<div style="position:absolute;left:1101px;top:76px;width:11px;height:11px;background:#fff"></div>
<div style="position:absolute;left:1131px;top:76px;width:11px;height:11px;background:#fff"></div>
<div style="position:absolute;left:1161px;top:76px;width:11px;height:11px;background:#fff"></div>
<div style="position:absolute;left:1191px;top:76px;width:11px;height:11px;background:#fff"></div>
<div style="position:absolute;left:1221px;top:76px;width:11px;height:11px;background:#fff"></div>
<div class="t" style="left:1245.00px;top:76.18px;font-size:11.6px;color:#ececec;transform:scaleX(0.935);transform-origin:0 0;">21</div>
<div class="t" style="left:302.50px;top:96.18px;font-size:11.6px;color:#ececec;transform:scaleX(0.935);transform-origin:0 0;">Text</div>
<div class="t" style="left:377.50px;top:96.18px;font-size:11.6px;color:#ececec;transform:scaleX(0.935);transform-origin:0 0;">employeeNumber</div>
<div class="t" style="left:852px;width:119px;text-align:center;top:96.18px;font-size:11.6px;color:#ececec;transform:scaleX(0.935);transform-origin:50% 0;">19.09.2025 14:22:27</div>
<div class="t" style="left:971px;width:44px;text-align:center;top:96.18px;font-size:11.6px;color:#ececec;transform:scaleX(0.935);transform-origin:50% 0;">1</div>
<div class="t" style="left:1016px;width:44px;text-align:center;top:96.18px;font-size:11.6px;color:#ececec;transform:scaleX(0.935);transform-origin:50% 0;">2</div>
<svg style="left:1071px;top:96px" width="11" height="11" viewBox="0 0 11 11"><rect width="11" height="11" fill="#fff"/><path d="M1.6 5.2 L4.3 7.9 L9.6 2.4" stroke="#3a3a3a" stroke-width="1.25" fill="none"/></svg>
<div style="position:absolute;left:1101px;top:96px;width:11px;height:11px;background:#fff"></div>
<div style="position:absolute;left:1131px;top:96px;width:11px;height:11px;background:#fff"></div>
<div style="position:absolute;left:1161px;top:96px;width:11px;height:11px;background:#fff"></div>
<div style="position:absolute;left:1191px;top:96px;width:11px;height:11px;background:#fff"></div>
<div style="position:absolute;left:1221px;top:96px;width:11px;height:11px;background:#fff"></div>
<div class="t" style="left:1245.00px;top:96.18px;font-size:11.6px;color:#ececec;transform:scaleX(0.935);transform-origin:0 0;">76</div>
<div class="t" style="left:302.50px;top:116.18px;font-size:11.6px;color:#ececec;transform:scaleX(0.935);transform-origin:0 0;">Text</div>
<div class="t" style="left:377.50px;top:116.18px;font-size:11.6px;color:#ececec;transform:scaleX(0.935);transform-origin:0 0;">employeeType</div>
<div class="t" style="left:852px;width:119px;text-align:center;top:116.18px;font-size:11.6px;color:#ececec;transform:scaleX(0.935);transform-origin:50% 0;">19.09.2025 14:22:27</div>
<div class="t" style="left:971px;width:44px;text-align:center;top:116.18px;font-size:11.6px;color:#ececec;transform:scaleX(0.935);transform-origin:50% 0;">1</div>
<div class="t" style="left:1016px;width:44px;text-align:center;top:116.18px;font-size:11.6px;color:#ececec;transform:scaleX(0.935);transform-origin:50% 0;">2</div>
<svg style="left:1071px;top:116px" width="11" height="11" viewBox="0 0 11 11"><rect width="11" height="11" fill="#fff"/><path d="M1.6 5.2 L4.3 7.9 L9.6 2.4" stroke="#3a3a3a" stroke-width="1.25" fill="none"/></svg>
<div style="position:absolute;left:1101px;top:116px;width:11px;height:11px;background:#fff"></div>
<div style="position:absolute;left:1131px;top:116px;width:11px;height:11px;background:#fff"></div>
<div style="position:absolute;left:1161px;top:116px;width:11px;height:11px;background:#fff"></div>
<div style="position:absolute;left:1191px;top:116px;width:11px;height:11px;background:#fff"></div>
<div style="position:absolute;left:1221px;top:116px;width:11px;height:11px;background:#fff"></div>
<div class="t" style="left:1245.00px;top:116.18px;font-size:11.6px;color:#ececec;transform:scaleX(0.935);transform-origin:0 0;">77</div>
<div class="t" style="left:302.50px;top:136.18px;font-size:11.6px;color:#ececec;transform:scaleX(0.935);transform-origin:0 0;">Text</div>
<div class="t" style="left:377.50px;top:136.18px;font-size:11.6px;color:#ececec;transform:scaleX(0.935);transform-origin:0 0;">EncryptIncomingMail</div>
<div class="t" style="left:496.50px;top:136.18px;font-size:11.6px;color:#ececec;transform:scaleX(0.935);transform-origin:0 0;">0</div>
<div class="t" style="left:852px;width:119px;text-align:center;top:136.18px;font-size:11.6px;color:#ececec;transform:scaleX(0.935);transform-origin:50% 0;">19.09.2025 14:22:27</div>
<div class="t" style="left:971px;width:44px;text-align:center;top:136.18px;font-size:11.6px;color:#ececec;transform:scaleX(0.935);transform-origin:50% 0;">1</div>
<div class="t" style="left:1016px;width:44px;text-align:center;top:136.18px;font-size:11.6px;color:#ececec;transform:scaleX(0.935);transform-origin:50% 0;">3</div>
<svg style="left:1071px;top:136px" width="11" height="11" viewBox="0 0 11 11"><rect width="11" height="11" fill="#fff"/><path d="M1.6 5.2 L4.3 7.9 L9.6 2.4" stroke="#3a3a3a" stroke-width="1.25" fill="none"/></svg>
<div style="position:absolute;left:1101px;top:136px;width:11px;height:11px;background:#fff"></div>
<div style="position:absolute;left:1131px;top:136px;width:11px;height:11px;background:#fff"></div>
<div style="position:absolute;left:1161px;top:136px;width:11px;height:11px;background:#fff"></div>
<div style="position:absolute;left:1191px;top:136px;width:11px;height:11px;background:#fff"></div>
<div style="position:absolute;left:1221px;top:136px;width:11px;height:11px;background:#fff"></div>
<div class="t" style="left:1245.00px;top:136.18px;font-size:11.6px;color:#ececec;transform:scaleX(0.935);transform-origin:0 0;">17</div>
<div class="t" style="left:302.50px;top:156.18px;font-size:11.6px;color:#ececec;transform:scaleX(0.935);transform-origin:0 0;">Text</div>
<div class="t" style="left:377.50px;top:156.18px;font-size:11.6px;color:#ececec;transform:scaleX(0.935);transform-origin:0 0;">FirstName</div>
<div class="t" style="left:496.50px;top:156.18px;font-size:11.6px;color:#ececec;transform:scaleX(0.935);transform-origin:0 0;">Tester101</div>
<div class="t" style="left:852px;width:119px;text-align:center;top:156.18px;font-size:11.6px;color:#ececec;transform:scaleX(0.935);transform-origin:50% 0;">19.09.2025 14:22:30</div>
<div class="t" style="left:971px;width:44px;text-align:center;top:156.18px;font-size:11.6px;color:#ececec;transform:scaleX(0.935);transform-origin:50% 0;">1</div>
<div class="t" style="left:1016px;width:44px;text-align:center;top:156.18px;font-size:11.6px;color:#ececec;transform:scaleX(0.935);transform-origin:50% 0;">11</div>
<svg style="left:1071px;top:156px" width="11" height="11" viewBox="0 0 11 11"><rect width="11" height="11" fill="#fff"/><path d="M1.6 5.2 L4.3 7.9 L9.6 2.4" stroke="#3a3a3a" stroke-width="1.25" fill="none"/></svg>
<div style="position:absolute;left:1101px;top:156px;width:11px;height:11px;background:#fff"></div>
<div style="position:absolute;left:1131px;top:156px;width:11px;height:11px;background:#fff"></div>
<div style="position:absolute;left:1161px;top:156px;width:11px;height:11px;background:#fff"></div>
<div style="position:absolute;left:1191px;top:156px;width:11px;height:11px;background:#fff"></div>
<div style="position:absolute;left:1221px;top:156px;width:11px;height:11px;background:#fff"></div>
<div class="t" style="left:1245.00px;top:156.18px;font-size:11.6px;color:#ececec;transform:scaleX(0.935);transform-origin:0 0;">92</div>
<div class="t" style="left:302.50px;top:176.18px;font-size:11.6px;color:#ececec;transform:scaleX(0.935);transform-origin:0 0;">Text</div>
<div class="t" style="left:377.50px;top:176.18px;font-size:11.6px;color:#ececec;transform:scaleX(0.935);transform-origin:0 0;">Form</div>
<div class="t" style="left:496.50px;top:176.18px;font-size:11.6px;color:#ececec;transform:scaleX(0.935);transform-origin:0 0;">Person</div>
<div class="t" style="left:852px;width:119px;text-align:center;top:176.18px;font-size:11.6px;color:#ececec;transform:scaleX(0.935);transform-origin:50% 0;">19.09.2025 14:22:27</div>
<div class="t" style="left:971px;width:44px;text-align:center;top:176.18px;font-size:11.6px;color:#ececec;transform:scaleX(0.935);transform-origin:50% 0;">1</div>
<div class="t" style="left:1016px;width:44px;text-align:center;top:176.18px;font-size:11.6px;color:#ececec;transform:scaleX(0.935);transform-origin:50% 0;">8</div>
<svg style="left:1071px;top:176px" width="11" height="11" viewBox="0 0 11 11"><rect width="11" height="11" fill="#fff"/><path d="M1.6 5.2 L4.3 7.9 L9.6 2.4" stroke="#3a3a3a" stroke-width="1.25" fill="none"/></svg>
<div style="position:absolute;left:1101px;top:176px;width:11px;height:11px;background:#fff"></div>
<div style="position:absolute;left:1131px;top:176px;width:11px;height:11px;background:#fff"></div>
<div style="position:absolute;left:1161px;top:176px;width:11px;height:11px;background:#fff"></div>
<div style="position:absolute;left:1191px;top:176px;width:11px;height:11px;background:#fff"></div>
<div style="position:absolute;left:1221px;top:176px;width:11px;height:11px;background:#fff"></div>
<div class="t" style="left:1245.00px;top:176.18px;font-size:11.6px;color:#ececec;transform:scaleX(0.935);transform-origin:0 0;">0</div>
<div class="t" style="left:302.50px;top:196.18px;font-size:11.6px;color:#ececec;transform:scaleX(0.935);transform-origin:0 0;">Text list</div>
<div class="t" style="left:377.50px;top:196.18px;font-size:11.6px;color:#ececec;transform:scaleX(0.935);transform-origin:0 0;">FullName</div>
<div class="t" style="left:496.50px;top:196.18px;font-size:11.6px;color:#ececec;transform:scaleX(0.935);transform-origin:0 0;">CN=Tester101 Testerov101/O=inzone; Tester101 Testerov101</div>
<div class="t" style="left:852px;width:119px;text-align:center;top:196.18px;font-size:11.6px;color:#ececec;transform:scaleX(0.935);transform-origin:50% 0;">19.09.2025 14:22:27</div>
<div class="t" style="left:971px;width:44px;text-align:center;top:196.18px;font-size:11.6px;color:#ececec;transform:scaleX(0.935);transform-origin:50% 0;">2</div>
<div class="t" style="left:1016px;width:44px;text-align:center;top:196.18px;font-size:11.6px;color:#ececec;transform:scaleX(0.935);transform-origin:50% 0;">62</div>
<svg style="left:1071px;top:196px" width="11" height="11" viewBox="0 0 11 11"><rect width="11" height="11" fill="#fff"/><path d="M1.6 5.2 L4.3 7.9 L9.6 2.4" stroke="#3a3a3a" stroke-width="1.25" fill="none"/></svg>
<div style="position:absolute;left:1101px;top:196px;width:11px;height:11px;background:#fff"></div>
<div style="position:absolute;left:1131px;top:196px;width:11px;height:11px;background:#fff"></div>
<svg style="left:1161px;top:196px" width="11" height="11" viewBox="0 0 11 11"><rect width="11" height="11" fill="#fff"/><path d="M1.6 5.2 L4.3 7.9 L9.6 2.4" stroke="#3a3a3a" stroke-width="1.25" fill="none"/></svg>
<div style="position:absolute;left:1191px;top:196px;width:11px;height:11px;background:#fff"></div>
<div style="position:absolute;left:1221px;top:196px;width:11px;height:11px;background:#fff"></div>
<div class="t" style="left:1245.00px;top:196.18px;font-size:11.6px;color:#ececec;transform:scaleX(0.935);transform-origin:0 0;">95</div>
<div class="t" style="left:302.50px;top:216.18px;font-size:11.6px;color:#ececec;transform:scaleX(0.935);transform-origin:0 0;">Text</div>
<div class="t" style="left:377.50px;top:216.18px;font-size:11.6px;color:#ececec;transform:scaleX(0.935);transform-origin:0 0;">HomeFAXPhoneNum...</div>
<div class="t" style="left:852px;width:119px;text-align:center;top:216.18px;font-size:11.6px;color:#ececec;transform:scaleX(0.935);transform-origin:50% 0;">19.09.2025 14:22:27</div>
<div class="t" style="left:971px;width:44px;text-align:center;top:216.18px;font-size:11.6px;color:#ececec;transform:scaleX(0.935);transform-origin:50% 0;">1</div>
<div class="t" style="left:1016px;width:44px;text-align:center;top:216.18px;font-size:11.6px;color:#ececec;transform:scaleX(0.935);transform-origin:50% 0;">2</div>
<svg style="left:1071px;top:216px" width="11" height="11" viewBox="0 0 11 11"><rect width="11" height="11" fill="#fff"/><path d="M1.6 5.2 L4.3 7.9 L9.6 2.4" stroke="#3a3a3a" stroke-width="1.25" fill="none"/></svg>
<div style="position:absolute;left:1101px;top:216px;width:11px;height:11px;background:#fff"></div>
<div style="position:absolute;left:1131px;top:216px;width:11px;height:11px;background:#fff"></div>
<div style="position:absolute;left:1161px;top:216px;width:11px;height:11px;background:#fff"></div>
<div style="position:absolute;left:1191px;top:216px;width:11px;height:11px;background:#fff"></div>
<div style="position:absolute;left:1221px;top:216px;width:11px;height:11px;background:#fff"></div>
<div class="t" style="left:1245.00px;top:216.18px;font-size:11.6px;color:#ececec;transform:scaleX(0.935);transform-origin:0 0;">40</div>
<div class="t" style="left:302.50px;top:236.18px;font-size:11.6px;color:#ececec;transform:scaleX(0.935);transform-origin:0 0;">Text</div>
<div class="t" style="left:377.50px;top:236.18px;font-size:11.6px;color:#ececec;transform:scaleX(0.935);transform-origin:0 0;">HomePostalAddress</div>
<div class="t" style="left:852px;width:119px;text-align:center;top:236.18px;font-size:11.6px;color:#ececec;transform:scaleX(0.935);transform-origin:50% 0;">19.09.2025 14:22:27</div>
<div class="t" style="left:971px;width:44px;text-align:center;top:236.18px;font-size:11.6px;color:#ececec;transform:scaleX(0.935);transform-origin:50% 0;">1</div>
<div class="t" style="left:1016px;width:44px;text-align:center;top:236.18px;font-size:11.6px;color:#ececec;transform:scaleX(0.935);transform-origin:50% 0;">2</div>
<svg style="left:1071px;top:236px" width="11" height="11" viewBox="0 0 11 11"><rect width="11" height="11" fill="#fff"/><path d="M1.6 5.2 L4.3 7.9 L9.6 2.4" stroke="#3a3a3a" stroke-width="1.25" fill="none"/></svg>
<div style="position:absolute;left:1101px;top:236px;width:11px;height:11px;background:#fff"></div>
<div style="position:absolute;left:1131px;top:236px;width:11px;height:11px;background:#fff"></div>
<div style="position:absolute;left:1161px;top:236px;width:11px;height:11px;background:#fff"></div>
<div style="position:absolute;left:1191px;top:236px;width:11px;height:11px;background:#fff"></div>
<div style="position:absolute;left:1221px;top:236px;width:11px;height:11px;background:#fff"></div>
<div class="t" style="left:1245.00px;top:236.18px;font-size:11.6px;color:#ececec;transform:scaleX(0.935);transform-origin:0 0;">71</div>
<div class="t" style="left:302.50px;top:256.18px;font-size:11.6px;color:#ececec;transform:scaleX(0.935);transform-origin:0 0;">Text</div>
<div class="t" style="left:377.50px;top:256.18px;font-size:11.6px;color:#ececec;transform:scaleX(0.935);transform-origin:0 0;">HTTPPassword</div>
<div class="t" style="left:496.50px;top:256.18px;font-size:11.6px;color:#ececec;transform:scaleX(0.935);transform-origin:0 0;">(HCbpZxOlCqLft4G5rc5l/zJ0mC30mCp0mC30mCzqjwOp/j8y7)</div>
<div class="t" style="left:852px;width:119px;text-align:center;top:256.18px;font-size:11.6px;color:#ececec;transform:scaleX(0.935);transform-origin:50% 0;">19.09.2025 14:22:27</div>
<div class="t" style="left:971px;width:44px;text-align:center;top:256.18px;font-size:11.6px;color:#ececec;transform:scaleX(0.935);transform-origin:50% 0;">1</div>
<div class="t" style="left:1016px;width:44px;text-align:center;top:256.18px;font-size:11.6px;color:#ececec;transform:scaleX(0.935);transform-origin:50% 0;">53</div>
<svg style="left:1071px;top:256px" width="11" height="11" viewBox="0 0 11 11"><rect width="11" height="11" fill="#fff"/><path d="M1.6 5.2 L4.3 7.9 L9.6 2.4" stroke="#3a3a3a" stroke-width="1.25" fill="none"/></svg>
<div style="position:absolute;left:1101px;top:256px;width:11px;height:11px;background:#fff"></div>
<div style="position:absolute;left:1131px;top:256px;width:11px;height:11px;background:#fff"></div>
<div style="position:absolute;left:1161px;top:256px;width:11px;height:11px;background:#fff"></div>
<div style="position:absolute;left:1191px;top:256px;width:11px;height:11px;background:#fff"></div>
<div style="position:absolute;left:1221px;top:256px;width:11px;height:11px;background:#fff"></div>
<div class="t" style="left:1245.00px;top:256.18px;font-size:11.6px;color:#ececec;transform:scaleX(0.935);transform-origin:0 0;">122</div>
<div class="t" style="left:302.50px;top:276.18px;font-size:11.6px;color:#ececec;transform:scaleX(0.935);transform-origin:0 0;">Time date</div>
<div class="t" style="left:377.50px;top:276.18px;font-size:11.6px;color:#ececec;transform:scaleX(0.935);transform-origin:0 0;">HTTPPasswordChan...</div>
<div class="t" style="left:496.50px;top:276.18px;font-size:11.6px;color:#ececec;transform:scaleX(0.935);transform-origin:0 0;">19.09.2025 14:22:27</div>
<div class="t" style="left:852px;width:119px;text-align:center;top:276.18px;font-size:11.6px;color:#ececec;transform:scaleX(0.935);transform-origin:50% 0;">19.09.2025 14:22:27</div>
<div class="t" style="left:971px;width:44px;text-align:center;top:276.18px;font-size:11.6px;color:#ececec;transform:scaleX(0.935);transform-origin:50% 0;">1</div>
<div class="t" style="left:1016px;width:44px;text-align:center;top:276.18px;font-size:11.6px;color:#ececec;transform:scaleX(0.935);transform-origin:50% 0;">10</div>
<svg style="left:1071px;top:276px" width="11" height="11" viewBox="0 0 11 11"><rect width="11" height="11" fill="#fff"/><path d="M1.6 5.2 L4.3 7.9 L9.6 2.4" stroke="#3a3a3a" stroke-width="1.25" fill="none"/></svg>
<div style="position:absolute;left:1101px;top:276px;width:11px;height:11px;background:#fff"></div>
<div style="position:absolute;left:1131px;top:276px;width:11px;height:11px;background:#fff"></div>
<div style="position:absolute;left:1161px;top:276px;width:11px;height:11px;background:#fff"></div>
<div style="position:absolute;left:1191px;top:276px;width:11px;height:11px;background:#fff"></div>
<div style="position:absolute;left:1221px;top:276px;width:11px;height:11px;background:#fff"></div>
<div class="t" style="left:1245.00px;top:276.18px;font-size:11.6px;color:#ececec;transform:scaleX(0.935);transform-origin:0 0;">115</div>
<div class="t" style="left:302.50px;top:296.18px;font-size:11.6px;color:#ececec;transform:scaleX(0.935);transform-origin:0 0;">Text</div>
<div class="t" style="left:377.50px;top:296.18px;font-size:11.6px;color:#ececec;transform:scaleX(0.935);transform-origin:0 0;">HTTPPasswordForce...</div>
<div class="t" style="left:852px;width:119px;text-align:center;top:296.18px;font-size:11.6px;color:#ececec;transform:scaleX(0.935);transform-origin:50% 0;">19.09.2025 14:22:27</div>
<div class="t" style="left:971px;width:44px;text-align:center;top:296.18px;font-size:11.6px;color:#ececec;transform:scaleX(0.935);transform-origin:50% 0;">1</div>
<div class="t" style="left:1016px;width:44px;text-align:center;top:296.18px;font-size:11.6px;color:#ececec;transform:scaleX(0.935);transform-origin:50% 0;">2</div>
<svg style="left:1071px;top:296px" width="11" height="11" viewBox="0 0 11 11"><rect width="11" height="11" fill="#fff"/><path d="M1.6 5.2 L4.3 7.9 L9.6 2.4" stroke="#3a3a3a" stroke-width="1.25" fill="none"/></svg>
<div style="position:absolute;left:1101px;top:296px;width:11px;height:11px;background:#fff"></div>
<div style="position:absolute;left:1131px;top:296px;width:11px;height:11px;background:#fff"></div>
<div style="position:absolute;left:1161px;top:296px;width:11px;height:11px;background:#fff"></div>
<div style="position:absolute;left:1191px;top:296px;width:11px;height:11px;background:#fff"></div>
<div style="position:absolute;left:1221px;top:296px;width:11px;height:11px;background:#fff"></div>
<div class="t" style="left:1245.00px;top:296.18px;font-size:11.6px;color:#ececec;transform:scaleX(0.935);transform-origin:0 0;">58</div>
<div class="t" style="left:302.50px;top:316.18px;font-size:11.6px;color:#ececec;transform:scaleX(0.935);transform-origin:0 0;">Text</div>
<div class="t" style="left:377.50px;top:316.18px;font-size:11.6px;color:#ececec;transform:scaleX(0.935);transform-origin:0 0;">ibm_bhMailInfo</div>
<div class="t" style="left:852px;width:119px;text-align:center;top:316.18px;font-size:11.6px;color:#ececec;transform:scaleX(0.935);transform-origin:50% 0;">19.09.2025 14:22:27</div>
<div class="t" style="left:971px;width:44px;text-align:center;top:316.18px;font-size:11.6px;color:#ececec;transform:scaleX(0.935);transform-origin:50% 0;">1</div>
<div class="t" style="left:1016px;width:44px;text-align:center;top:316.18px;font-size:11.6px;color:#ececec;transform:scaleX(0.935);transform-origin:50% 0;">2</div>
<svg style="left:1071px;top:316px" width="11" height="11" viewBox="0 0 11 11"><rect width="11" height="11" fill="#fff"/><path d="M1.6 5.2 L4.3 7.9 L9.6 2.4" stroke="#3a3a3a" stroke-width="1.25" fill="none"/></svg>
<div style="position:absolute;left:1101px;top:316px;width:11px;height:11px;background:#fff"></div>
<div style="position:absolute;left:1131px;top:316px;width:11px;height:11px;background:#fff"></div>
<div style="position:absolute;left:1161px;top:316px;width:11px;height:11px;background:#fff"></div>
<div style="position:absolute;left:1191px;top:316px;width:11px;height:11px;background:#fff"></div>
<div style="position:absolute;left:1221px;top:316px;width:11px;height:11px;background:#fff"></div>
<div class="t" style="left:1245.00px;top:316.18px;font-size:11.6px;color:#ececec;transform:scaleX(0.935);transform-origin:0 0;">67</div>
<div class="t" style="left:302.50px;top:336.18px;font-size:11.6px;color:#ececec;transform:scaleX(0.935);transform-origin:0 0;">Text</div>
<div class="t" style="left:377.50px;top:336.18px;font-size:11.6px;color:#ececec;transform:scaleX(0.935);transform-origin:0 0;">INetPublicKey</div>
<div class="t" style="left:496.50px;top:336.18px;font-size:11.6px;color:#ececec;transform:scaleX(0.935);transform-origin:0 0;">30820122 300D0609 2A864886 F70D0101; 01050003 82010F00 3082...</div>
<div class="t" style="left:852px;width:119px;text-align:center;top:336.18px;font-size:11.6px;color:#ececec;transform:scaleX(0.935);transform-origin:50% 0;">19.09.2025 14:22:27</div>
<div class="t" style="left:971px;width:44px;text-align:center;top:336.18px;font-size:11.6px;color:#ececec;transform:scaleX(0.935);transform-origin:50% 0;">1</div>
<div class="t" style="left:1016px;width:44px;text-align:center;top:336.18px;font-size:11.6px;color:#ececec;transform:scaleX(0.935);transform-origin:50% 0;">663</div>
<svg style="left:1071px;top:336px" width="11" height="11" viewBox="0 0 11 11"><rect width="11" height="11" fill="#fff"/><path d="M1.6 5.2 L4.3 7.9 L9.6 2.4" stroke="#3a3a3a" stroke-width="1.25" fill="none"/></svg>
<div style="position:absolute;left:1101px;top:336px;width:11px;height:11px;background:#fff"></div>
<div style="position:absolute;left:1131px;top:336px;width:11px;height:11px;background:#fff"></div>
<div style="position:absolute;left:1161px;top:336px;width:11px;height:11px;background:#fff"></div>
<div style="position:absolute;left:1191px;top:336px;width:11px;height:11px;background:#fff"></div>
<div style="position:absolute;left:1221px;top:336px;width:11px;height:11px;background:#fff"></div>
<div class="t" style="left:1245.00px;top:336.18px;font-size:11.6px;color:#ececec;transform:scaleX(0.935);transform-origin:0 0;">7</div>
<div class="t" style="left:302.50px;top:356.18px;font-size:11.6px;color:#ececec;transform:scaleX(0.935);transform-origin:0 0;">Text</div>
<div class="t" style="left:377.50px;top:356.18px;font-size:11.6px;color:#ececec;transform:scaleX(0.935);transform-origin:0 0;">initials</div>
<div class="t" style="left:852px;width:119px;text-align:center;top:356.18px;font-size:11.6px;color:#ececec;transform:scaleX(0.935);transform-origin:50% 0;">19.09.2025 14:22:27</div>
<div class="t" style="left:971px;width:44px;text-align:center;top:356.18px;font-size:11.6px;color:#ececec;transform:scaleX(0.935);transform-origin:50% 0;">1</div>
<div class="t" style="left:1016px;width:44px;text-align:center;top:356.18px;font-size:11.6px;color:#ececec;transform:scaleX(0.935);transform-origin:50% 0;">2</div>
<svg style="left:1071px;top:356px" width="11" height="11" viewBox="0 0 11 11"><rect width="11" height="11" fill="#fff"/><path d="M1.6 5.2 L4.3 7.9 L9.6 2.4" stroke="#3a3a3a" stroke-width="1.25" fill="none"/></svg>
<div style="position:absolute;left:1101px;top:356px;width:11px;height:11px;background:#fff"></div>
<div style="position:absolute;left:1131px;top:356px;width:11px;height:11px;background:#fff"></div>
<div style="position:absolute;left:1161px;top:356px;width:11px;height:11px;background:#fff"></div>
<div style="position:absolute;left:1191px;top:356px;width:11px;height:11px;background:#fff"></div>
<div style="position:absolute;left:1221px;top:356px;width:11px;height:11px;background:#fff"></div>
<div class="t" style="left:1245.00px;top:356.18px;font-size:11.6px;color:#ececec;transform:scaleX(0.935);transform-origin:0 0;">78</div>
<div class="t" style="left:302.50px;top:376.18px;font-size:11.6px;color:#ececec;transform:scaleX(0.935);transform-origin:0 0;">Text</div>
<div class="t" style="left:377.50px;top:376.18px;font-size:11.6px;color:#ececec;transform:scaleX(0.935);transform-origin:0 0;">internationaliSDNNu...</div>
<div class="t" style="left:852px;width:119px;text-align:center;top:376.18px;font-size:11.6px;color:#ececec;transform:scaleX(0.935);transform-origin:50% 0;">19.09.2025 14:22:27</div>
<div class="t" style="left:971px;width:44px;text-align:center;top:376.18px;font-size:11.6px;color:#ececec;transform:scaleX(0.935);transform-origin:50% 0;">1</div>
<div class="t" style="left:1016px;width:44px;text-align:center;top:376.18px;font-size:11.6px;color:#ececec;transform:scaleX(0.935);transform-origin:50% 0;">2</div>
<svg style="left:1071px;top:376px" width="11" height="11" viewBox="0 0 11 11"><rect width="11" height="11" fill="#fff"/><path d="M1.6 5.2 L4.3 7.9 L9.6 2.4" stroke="#3a3a3a" stroke-width="1.25" fill="none"/></svg>
<div style="position:absolute;left:1101px;top:376px;width:11px;height:11px;background:#fff"></div>
<div style="position:absolute;left:1131px;top:376px;width:11px;height:11px;background:#fff"></div>
<div style="position:absolute;left:1161px;top:376px;width:11px;height:11px;background:#fff"></div>
<div style="position:absolute;left:1191px;top:376px;width:11px;height:11px;background:#fff"></div>
<div style="position:absolute;left:1221px;top:376px;width:11px;height:11px;background:#fff"></div>
<div class="t" style="left:1245.00px;top:376.18px;font-size:11.6px;color:#ececec;transform:scaleX(0.935);transform-origin:0 0;">90</div>
<div style="position:absolute;left:298px;top:388px;width:1007px;height:1px;background:#050505"></div>
<div style="position:absolute;left:299px;top:389px;width:1005px;height:23px;background:#1f1f1f"></div>
<div style="position:absolute;left:1287px;top:55px;width:16px;height:333px;background:#f0f0f0"></div>
<div style="position:absolute;left:1303px;top:55px;width:1px;height:333px;background:#fafafa"></div>
<div style="position:absolute;left:1288px;top:158px;width:14px;height:38px;background:#cdcdcd"></div>
<svg style="left:1291px;top:61px" width="9" height="6" viewBox="0 0 9 6"><path d="M0.5 5 L4.5 1 L8.5 5" stroke="#606060" stroke-width="2" fill="none"/></svg>
<svg style="left:1291px;top:377px" width="9" height="6" viewBox="0 0 9 6"><path d="M0.5 1 L4.5 5 L8.5 1" stroke="#606060" stroke-width="2" fill="none"/></svg>
<div style="position:absolute;left:297px;top:392px;width:1px;height:339px;background:#8a8a8a"></div>
<div style="position:absolute;left:298px;top:412px;width:1007px;height:319px;background:#ffffff"></div>
<div style="position:absolute;left:302px;top:414px;width:999px;height:312px;background:#1f1f1f"></div>
<div style="position:absolute;left:1302px;top:414px;width:1px;height:312px;background:#dcdcdc"></div>
<div style="position:absolute;left:298px;top:728px;width:1005px;height:1px;background:#e4e4e4"></div>
<div style="position:absolute;left:298px;top:391px;width:120px;height:1px;background:#080808"></div>
<div style="position:absolute;left:298px;top:392px;width:120px;height:22px;background:#ffffff"></div>
<div style="position:absolute;left:418px;top:393px;width:60px;height:1px;background:#080808"></div>
<div style="position:absolute;left:477px;top:393px;width:1px;height:19px;background:#080808"></div>
<div style="position:absolute;left:418px;top:394px;width:59px;height:18px;background:#f0f0f0"></div>
<div class="t" style="left:306.00px;top:397.03px;font-size:10.6px;color:#000;">Document Information</div>
<div class="t" style="left:422.00px;top:399.20px;font-size:10.4px;color:#000;">Field value</div>
<div class="t" style="left:309.00px;top:422.77px;font-size:11.5px;color:#ececec;transform:scaleX(0.93);transform-origin:0 0;">UNID</div>
<div class="t" style="left:309.00px;top:443.77px;font-size:11.5px;color:#ececec;transform:scaleX(0.93);transform-origin:0 0;">NoteID</div>
<div class="t" style="left:309.00px;top:464.77px;font-size:11.5px;color:#ececec;transform:scaleX(0.93);transform-origin:0 0;">Class</div>
<div class="t" style="left:309.00px;top:485.77px;font-size:11.5px;color:#ececec;transform:scaleX(0.93);transform-origin:0 0;">Sequence number</div>
<div class="t" style="left:309.00px;top:506.77px;font-size:11.5px;color:#ececec;transform:scaleX(0.93);transform-origin:0 0;">Size (in bytes)</div>
<div style="position:absolute;left:355px;top:419px;width:222px;height:18px;border:1px solid #7a7a7a"></div>
<div class="t" style="left:357.00px;top:422.77px;font-size:11.5px;color:#ececec;transform:scaleX(0.93);transform-origin:0 0;">13184998493B7CD343258D0A003E7B01</div>
<div style="position:absolute;left:355px;top:440px;width:222px;height:18px;border:1px solid #7a7a7a"></div>
<div class="t" style="left:357.00px;top:443.77px;font-size:11.5px;color:#ececec;transform:scaleX(0.93);transform-origin:0 0;">10870</div>
<div style="position:absolute;left:355px;top:461px;width:222px;height:18px;border:1px solid #7a7a7a"></div>
<div class="t" style="left:357.00px;top:464.77px;font-size:11.5px;color:#ececec;transform:scaleX(0.93);transform-origin:0 0;">1 (Document)</div>
<div style="position:absolute;left:422px;top:482px;width:155px;height:18px;border:1px solid #7a7a7a"></div>
<div class="t" style="left:424.00px;top:485.77px;font-size:11.5px;color:#ececec;transform:scaleX(0.93);transform-origin:0 0;">3</div>
<div style="position:absolute;left:422px;top:503px;width:155px;height:18px;border:1px solid #7a7a7a"></div>
<div class="t" style="left:424.00px;top:506.77px;font-size:11.5px;color:#ececec;transform:scaleX(0.93);transform-origin:0 0;">3225</div>
<div class="t" style="left:597.00px;top:422.77px;font-size:11.5px;color:#ececec;transform:scaleX(0.93);transform-origin:0 0;">Created</div>
<div style="position:absolute;left:710px;top:419px;width:155px;height:18px;border:1px solid #7a7a7a"></div>
<div class="t" style="left:712.00px;top:422.77px;font-size:11.5px;color:#ececec;transform:scaleX(0.93);transform-origin:0 0;">19.09.2025 14:22:27</div>
<div class="t" style="left:597.00px;top:443.77px;font-size:11.5px;color:#ececec;transform:scaleX(0.93);transform-origin:0 0;">Added in this db</div>
<div style="position:absolute;left:710px;top:440px;width:155px;height:18px;border:1px solid #7a7a7a"></div>
<div class="t" style="left:712.00px;top:443.77px;font-size:11.5px;color:#ececec;transform:scaleX(0.93);transform-origin:0 0;">19.09.2025 14:22:27</div>
<div class="t" style="left:597.00px;top:464.77px;font-size:11.5px;color:#ececec;transform:scaleX(0.93);transform-origin:0 0;">Modified</div>
<div style="position:absolute;left:710px;top:461px;width:155px;height:18px;border:1px solid #7a7a7a"></div>
<div class="t" style="left:712.00px;top:464.77px;font-size:11.5px;color:#ececec;transform:scaleX(0.93);transform-origin:0 0;">30.10.2025 01:48:31</div>
<div class="t" style="left:597.00px;top:485.77px;font-size:11.5px;color:#ececec;transform:scaleX(0.93);transform-origin:0 0;">Modified in this db</div>
<div style="position:absolute;left:710px;top:482px;width:155px;height:18px;border:1px solid #7a7a7a"></div>
<div class="t" style="left:712.00px;top:485.77px;font-size:11.5px;color:#ececec;transform:scaleX(0.93);transform-origin:0 0;">30.10.2025 01:48:31</div>
<div class="t" style="left:309.00px;top:541.27px;font-size:11.5px;color:#ececec;transform:scaleX(0.93);transform-origin:0 0;">Parent NoteID</div>
<div class="t" style="left:309.00px;top:562.27px;font-size:11.5px;color:#ececec;transform:scaleX(0.93);transform-origin:0 0;">Number of responses</div>
<div style="position:absolute;left:422px;top:538px;width:77px;height:18px;border:1px solid #7a7a7a"></div>
<div class="t" style="left:424.00px;top:541.77px;font-size:11.5px;color:#ececec;transform:scaleX(0.93);transform-origin:0 0;">0</div>
<div style="position:absolute;left:422px;top:559px;width:77px;height:18px;border:1px solid #7a7a7a"></div>
<div class="t" style="left:424.00px;top:562.77px;font-size:11.5px;color:#ececec;transform:scaleX(0.93);transform-origin:0 0;">0</div>
<div style="position:absolute;left:505px;top:539px;width:72px;height:17px;background:#cccccc"></div>
<div class="t" style="left:505px;width:72px;text-align:center;top:541.27px;font-size:11.5px;color:#8c8c8c;transform:scaleX(0.93);transform-origin:50% 0;">Load</div>
<div style="position:absolute;left:505px;top:560px;width:72px;height:17px;background:#cccccc"></div>
<div class="t" style="left:505px;width:72px;text-align:center;top:562.27px;font-size:11.5px;color:#8c8c8c;transform:scaleX(0.93);transform-origin:50% 0;">Load</div>
<div style="position:absolute;left:13px;top:754px;width:1px;height:2px;background:#d0d0d0"></div>
<div class="t" style="left:1126.20px;top:742.50px;font-size:12.4px;color:#ececec;transform:scaleX(0.8663);transform-origin:0 0;">2017</div>
<div style="position:absolute;left:1155px;top:740px;width:150px;height:16px;background:#d4cfd4"></div>
<div style="position:absolute;left:1156px;top:741px;width:148px;height:14px;background:#06a826"></div>
</body></html>
